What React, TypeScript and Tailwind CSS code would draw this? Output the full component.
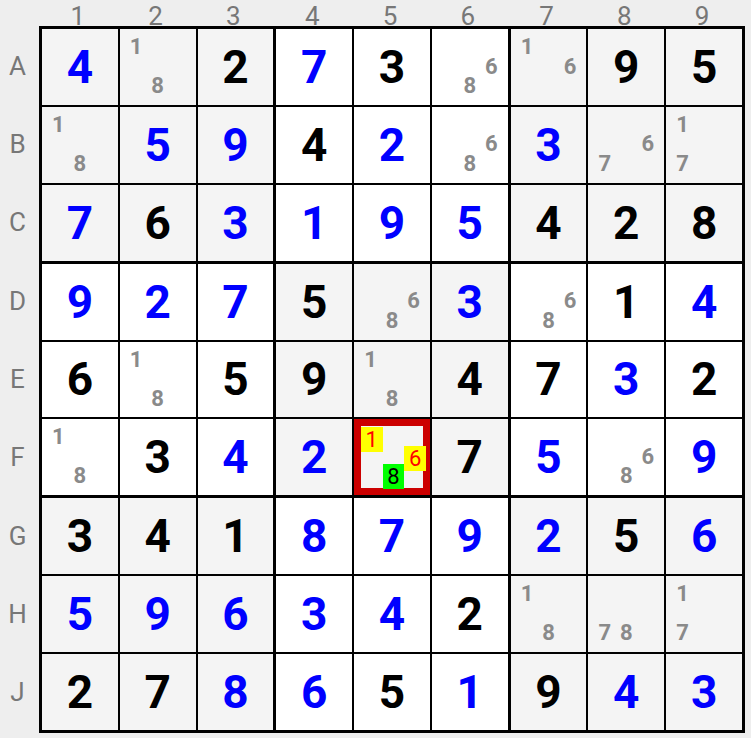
import React from 'react';

// "b4" = blue given, "k4" = black digit, "p18" = pencil marks 1 and 8, "s" = selected cell
const board: string[][] = [
  ['b4', 'p18', 'k2', 'b7', 'k3', 'p68', 'p16', 'k9', 'k5'],
  ['p18', 'b5', 'b9', 'k4', 'b2', 'p68', 'b3', 'p67', 'p17'],
  ['b7', 'k6', 'b3', 'b1', 'b9', 'b5', 'k4', 'k2', 'k8'],
  ['b9', 'b2', 'b7', 'k5', 'p68', 'b3', 'p68', 'k1', 'b4'],
  ['k6', 'p18', 'k5', 'k9', 'p18', 'k4', 'k7', 'b3', 'k2'],
  ['p18', 'k3', 'b4', 'b2', 's', 'k7', 'b5', 'p68', 'b9'],
  ['k3', 'k4', 'k1', 'b8', 'b7', 'b9', 'b2', 'k5', 'b6'],
  ['b5', 'b9', 'b6', 'b3', 'b4', 'k2', 'p18', 'p78', 'p17'],
  ['k2', 'k7', 'b8', 'b6', 'k5', 'b1', 'k9', 'b4', 'b3'],
];

const rowNames = ['A', 'B', 'C', 'D', 'E', 'F', 'G', 'H', 'J'];
const digits = [1, 2, 3, 4, 5, 6, 7, 8, 9];

const Pencil: React.FC<{ marks: string }> = ({ marks }) => (
  <div className="grid grid-cols-[21.5px_21.5px_21.5px] grid-rows-[19.5px_19.5px_19.5px] justify-center pt-[8px] h-full">
    {digits.map((d) => (
      <div key={d} className="flex items-center justify-center text-[22px] leading-[19.5px] font-bold text-[#8a8a8a]">
        {marks.includes(String(d)) ? d : ''}
      </div>
    ))}
  </div>
);

const SelectedCell: React.FC = () => {
  const marks: Record<number, string> = {
    1: 'bg-[#ffff00] text-[#ff0000]',
    6: 'bg-[#ffff00] text-[#ff0000]',
    8: 'bg-[#00ff00] text-black',
  };
  return (
    <div className="relative bg-[#f4f4f4]">
      <div className="absolute inset-0 border-[7px] border-[#cc0000]" />
      <div className="relative grid grid-cols-[21.7px_21.7px_21.7px] grid-rows-[18.5px_18.5px_18.5px] justify-center pt-[11px] pl-[3px]">
        {digits.map((d) => (
          <div key={d} className="flex items-center justify-center">
            {marks[d] ? (
              <span className={`flex items-center justify-center w-[21.7px] h-[25px] -my-[3px] text-[22px] ${marks[d]}`}>
                {d}
              </span>
            ) : null}
          </div>
        ))}
      </div>
    </div>
  );
};

const Cell: React.FC<{ code: string; shaded: boolean }> = ({ code, shaded }) => {
  if (code === 's') return <SelectedCell />;
  const bg = shaded ? 'bg-[#f4f4f4]' : 'bg-white';
  if (code[0] === 'p') {
    return (
      <div className={bg}>
        <Pencil marks={code.slice(1)} />
      </div>
    );
  }
  return (
    <div className={`${bg} flex items-center justify-center`}>
      <span className={`text-[46px] leading-none font-bold ${code[0] === 'b' ? 'text-[#0000ff]' : 'text-black'}`}>
        {code[1]}
      </span>
    </div>
  );
};

export default function App() {
  return (
    <div className="w-[751px] h-[738px] bg-[#eeeeee] flex font-['Roboto',sans-serif] overflow-hidden">
      <div className="w-[39px] pt-[26px] shrink-0">
        <div className="h-[707px] py-[3px] grid grid-rows-3 gap-[3px]">
          {[0, 1, 2].map((b) => (
            <div key={b} className="grid grid-rows-3 gap-[2px]">
              {[0, 1, 2].map((i) => (
                <div key={i} className="flex items-center justify-center pr-[4px] text-[26px] text-[#777777]">
                  {rowNames[b * 3 + i]}
                </div>
              ))}
            </div>
          ))}
        </div>
      </div>
      <div className="flex flex-col">
        <div className="h-[26px] w-[706px] px-[3px] grid grid-cols-3 gap-[3px]">
          {[0, 1, 2].map((b) => (
            <div key={b} className="grid grid-cols-3 gap-[2px]">
              {[0, 1, 2].map((j) => (
                <div key={j} className="flex justify-center pt-[3px] pr-[4px] text-[26px] leading-[26px] text-[#777777]">
                  {b * 3 + j + 1}
                </div>
              ))}
            </div>
          ))}
        </div>
        <div className="relative w-[706px] h-[707px] bg-black p-[3px] grid grid-cols-3 grid-rows-3 gap-[3px]">
          {[0, 1, 2].map((br) =>
            [0, 1, 2].map((bc) => (
              <div key={`${br}-${bc}`} className="grid grid-cols-3 grid-rows-3 gap-[2px]">
                {[0, 1, 2].map((i) =>
                  [0, 1, 2].map((j) => (
                    <Cell
                      key={`${i}-${j}`}
                      code={board[br * 3 + i][bc * 3 + j]}
                      shaded={(br + bc) % 2 === 0}
                    />
                  ))
                )}
              </div>
            ))
          )}
        </div>
      </div>
    </div>
  );
}
